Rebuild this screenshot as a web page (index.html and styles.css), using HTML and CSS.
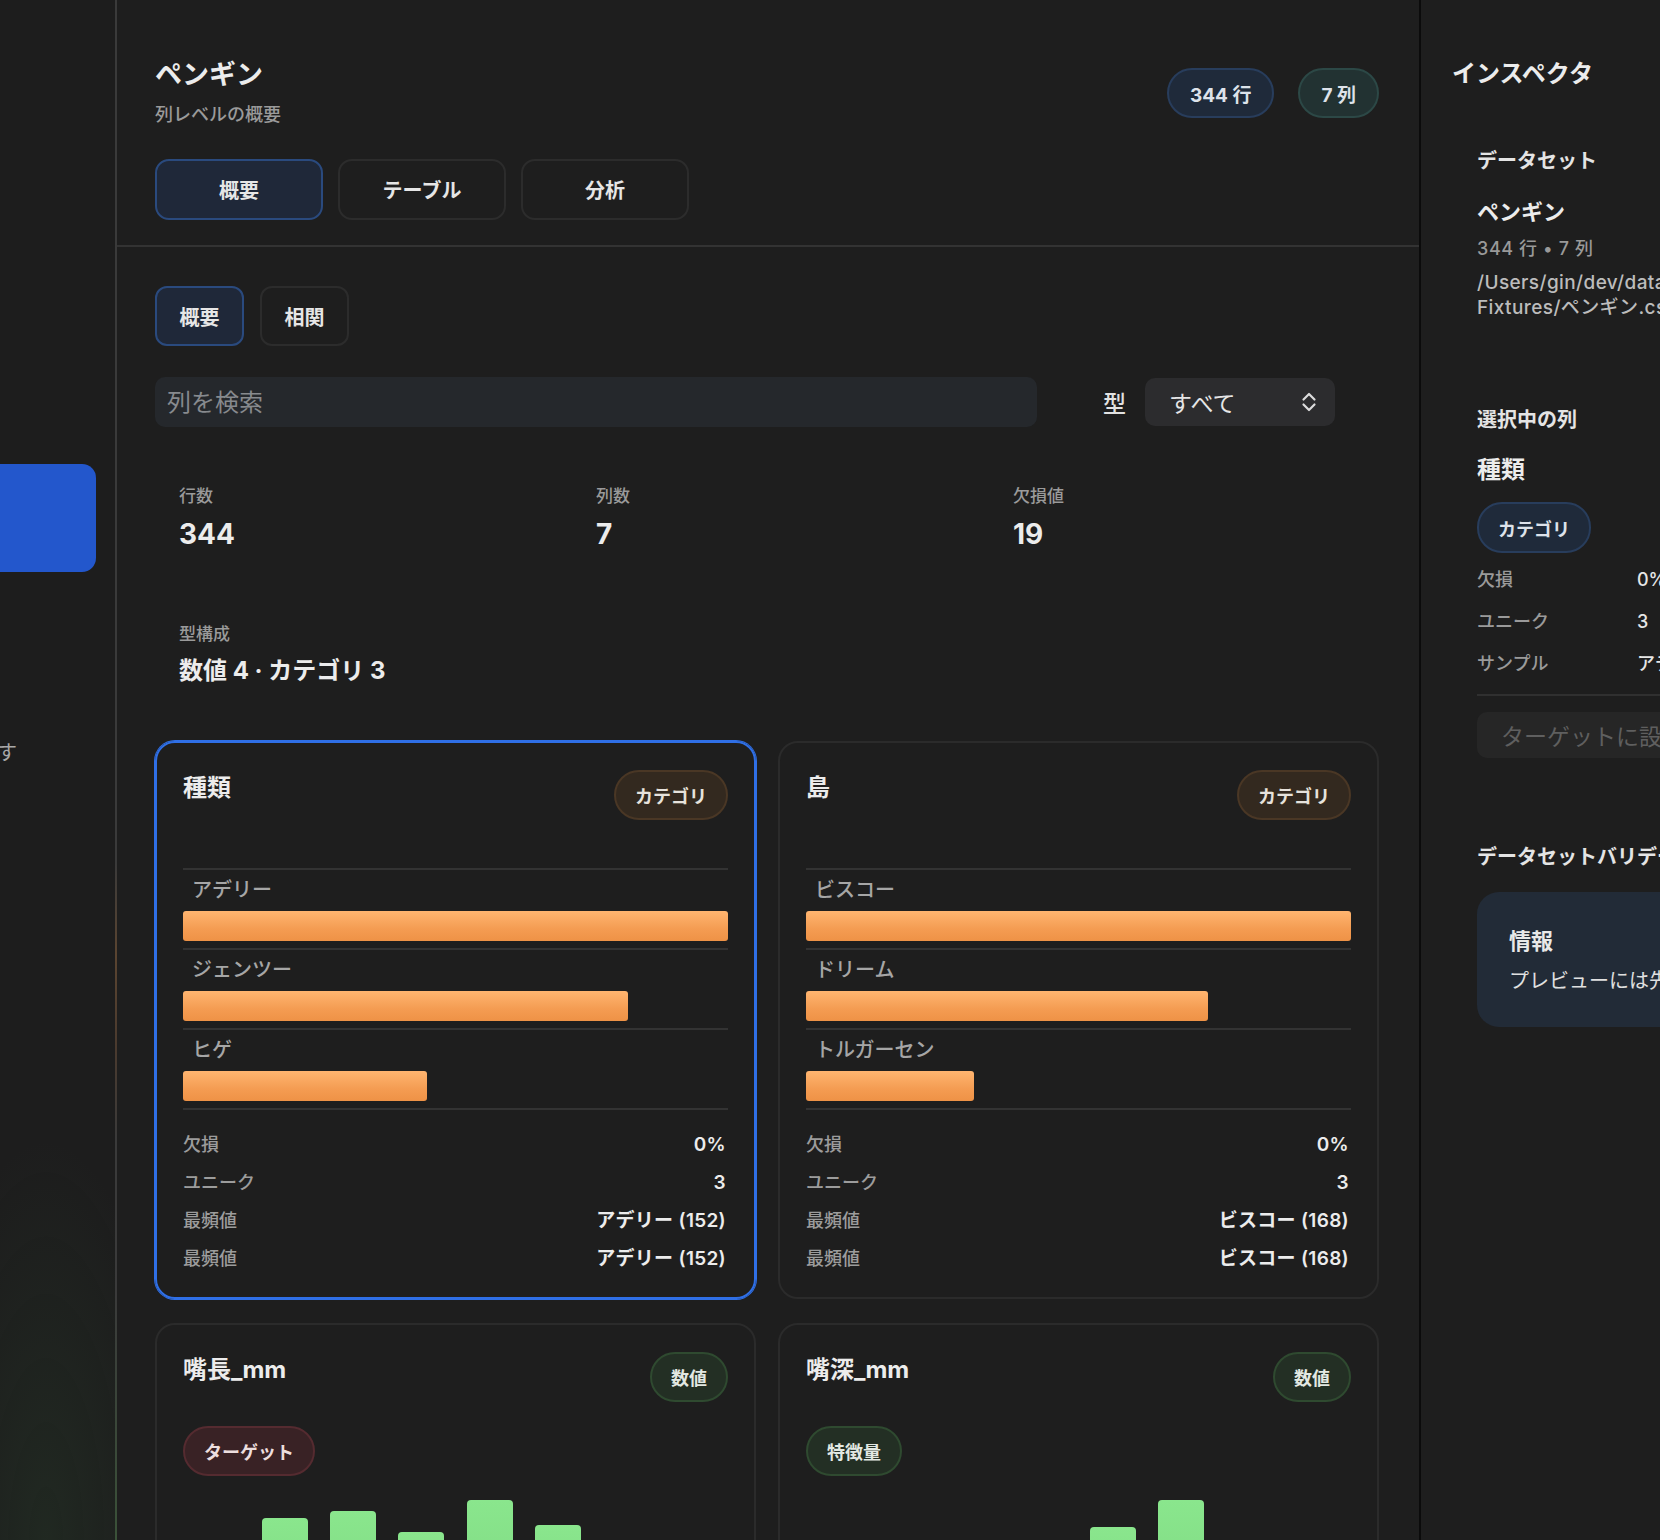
FILE: index.html
```html
<!DOCTYPE html>
<html lang="ja">
<head>
<meta charset="utf-8">
<title>ペンギン</title>
<link rel="stylesheet" href="styles.css">
</head>
<body>
<div class="app">
  <aside class="sidebar">
    <div class="side-active"></div>
    <div class="side-note">データを読み込んでいます</div>
  </aside>

  <main class="main">
    <header class="main-header">
      <div class="head-row">
        <div class="head-text">
          <h1 class="title">ペンギン</h1>
          <p class="subtitle">列レベルの概要</p>
        </div>
        <div class="pills">
          <span class="pill pill-blue">344 行</span>
          <span class="pill pill-teal">7 列</span>
        </div>
      </div>
      <nav class="tabs">
        <button class="tab is-active">概要</button>
        <button class="tab">テーブル</button>
        <button class="tab">分析</button>
      </nav>
    </header>

    <section class="content">
      <div class="subtabs">
        <button class="subtab is-active">概要</button>
        <button class="subtab">相関</button>
      </div>

      <div class="filter-row">
        <input class="search" type="text" placeholder="列を検索">
        <span class="filter-label">型</span>
        <div class="select">
          <span>すべて</span>
          <svg class="chev" width="16" height="22" viewBox="0 0 16 22"><path d="M2.5 8.5 L8 3 L13.5 8.5" fill="none" stroke="#dcdcdc" stroke-width="2.2" stroke-linecap="round" stroke-linejoin="round"/><path d="M2.5 13.5 L8 19 L13.5 13.5" fill="none" stroke="#dcdcdc" stroke-width="2.2" stroke-linecap="round" stroke-linejoin="round"/></svg>
        </div>
      </div>

      <div class="stats">
        <div class="stat"><div class="stat-label">行数</div><div class="stat-value">344</div></div>
        <div class="stat"><div class="stat-label">列数</div><div class="stat-value">7</div></div>
        <div class="stat"><div class="stat-label">欠損値</div><div class="stat-value">19</div></div>
        <div class="stat"><div class="stat-label">型構成</div><div class="stat-value stat-value-sm">数値 4 · カテゴリ 3</div></div>
      </div>

      <div class="cards">
        <article class="card is-selected">
          <div class="card-head">
            <h2 class="card-title">種類</h2>
            <span class="badge badge-cat">カテゴリ</span>
          </div>
          <div class="card-tags"></div>
          <div class="cat-list">
            <div class="cat-row"><div class="cat-label">アデリー</div><div class="cat-bar" style="width:100%"></div></div>
            <div class="cat-row"><div class="cat-label">ジェンツー</div><div class="cat-bar" style="width:81.6%"></div></div>
            <div class="cat-row"><div class="cat-label">ヒゲ</div><div class="cat-bar" style="width:44.7%"></div></div>
          </div>
          <div class="kv">
            <div class="kv-row"><span class="kv-k">欠損</span><span class="kv-v">0%</span></div>
            <div class="kv-row"><span class="kv-k">ユニーク</span><span class="kv-v">3</span></div>
            <div class="kv-row"><span class="kv-k">最頻値</span><span class="kv-v">アデリー (152)</span></div>
            <div class="kv-row"><span class="kv-k">最頻値</span><span class="kv-v">アデリー (152)</span></div>
          </div>
        </article>

        <article class="card">
          <div class="card-head">
            <h2 class="card-title">島</h2>
            <span class="badge badge-cat">カテゴリ</span>
          </div>
          <div class="card-tags"></div>
          <div class="cat-list">
            <div class="cat-row"><div class="cat-label">ビスコー</div><div class="cat-bar" style="width:100%"></div></div>
            <div class="cat-row"><div class="cat-label">ドリーム</div><div class="cat-bar" style="width:73.8%"></div></div>
            <div class="cat-row"><div class="cat-label">トルガーセン</div><div class="cat-bar" style="width:30.9%"></div></div>
          </div>
          <div class="kv">
            <div class="kv-row"><span class="kv-k">欠損</span><span class="kv-v">0%</span></div>
            <div class="kv-row"><span class="kv-k">ユニーク</span><span class="kv-v">3</span></div>
            <div class="kv-row"><span class="kv-k">最頻値</span><span class="kv-v">ビスコー (168)</span></div>
            <div class="kv-row"><span class="kv-k">最頻値</span><span class="kv-v">ビスコー (168)</span></div>
          </div>
        </article>

        <article class="card">
          <div class="card-head">
            <h2 class="card-title">嘴長_mm</h2>
            <span class="badge badge-num">数値</span>
          </div>
          <div class="card-tags"><span class="badge badge-target">ターゲット</span></div>
          <div class="hist">
            <div class="hist-slot"><div class="hist-bar" style="height:30px"></div></div>
            <div class="hist-slot"><div class="hist-bar" style="height:122px"></div></div>
            <div class="hist-slot"><div class="hist-bar" style="height:129px"></div></div>
            <div class="hist-slot"><div class="hist-bar" style="height:108px"></div></div>
            <div class="hist-slot"><div class="hist-bar" style="height:140px"></div></div>
            <div class="hist-slot"><div class="hist-bar" style="height:115px"></div></div>
            <div class="hist-slot"><div class="hist-bar" style="height:60px"></div></div>
            <div class="hist-slot"><div class="hist-bar" style="height:20px"></div></div>
          </div>
        </article>

        <article class="card">
          <div class="card-head">
            <h2 class="card-title">嘴深_mm</h2>
            <span class="badge badge-num">数値</span>
          </div>
          <div class="card-tags"><span class="badge badge-num">特徴量</span></div>
          <div class="hist">
            <div class="hist-slot"><div class="hist-bar" style="height:35px"></div></div>
            <div class="hist-slot"><div class="hist-bar" style="height:60px"></div></div>
            <div class="hist-slot"><div class="hist-bar" style="height:80px"></div></div>
            <div class="hist-slot"><div class="hist-bar" style="height:92px"></div></div>
            <div class="hist-slot"><div class="hist-bar" style="height:113px"></div></div>
            <div class="hist-slot"><div class="hist-bar" style="height:140px"></div></div>
            <div class="hist-slot"><div class="hist-bar" style="height:70px"></div></div>
            <div class="hist-slot"><div class="hist-bar" style="height:30px"></div></div>
          </div>
        </article>
      </div>
    </section>
  </main>

  <aside class="inspector">
    <h2 class="insp-title">インスペクタ</h2>
    <div class="insp-body">
      <h3 class="insp-h insp-h-first">データセット</h3>
      <div class="insp-name">ペンギン</div>
      <div class="insp-meta">344 行 • 7 列</div>
      <div class="insp-path">/Users/gin/dev/datalens/Tests/<br>Fixtures/ペンギン.csv</div>

      <h3 class="insp-h insp-h-sel">選択中の列</h3>
      <div class="insp-col">種類</div>
      <span class="badge badge-blue insp-badge">カテゴリ</span>
      <div class="insp-kv">
        <div class="insp-row"><span class="insp-k">欠損</span><span class="insp-v">0%</span></div>
        <div class="insp-row"><span class="insp-k">ユニーク</span><span class="insp-v">3</span></div>
        <div class="insp-row"><span class="insp-k">サンプル</span><span class="insp-v">アデリー, ジェンツー</span></div>
      </div>
      <button class="insp-btn" disabled>ターゲットに設定</button>

      <h3 class="insp-h insp-h-val">データセットバリデーション</h3>
      <div class="info-box">
        <div class="info-title">情報</div>
        <div class="info-text">プレビューには先頭の行のみが表示されます</div>
      </div>
    </div>
  </aside>
</div>
<div class="ghost">mm||嘴長_mm||体重_g forecastDates=</div>
</body>
</html>
```

FILE: styles.css
```css
* { box-sizing: border-box; }
html, body { margin: 0; padding: 0; }
body {
  width: 1660px;
  height: 1540px;
  overflow: hidden;
  position: relative;
  background: #1e1e1e;
  color: #e8e8e8;
  font-family: "Inter", "Noto Sans CJK JP", sans-serif;
}
h1, h2, h3, p { margin: 0; }
button { font-family: inherit; }

.app {
  display: flex;
  width: 2100px;
  height: 1540px;
}

/* sidebar */
.sidebar {
  width: 117px;
  flex: none;
  border-right: 2px solid #3a3a3a;
  border-image: linear-gradient(to bottom, #3a3a3a 0%, #3a3a3a 56%, #5a4430 62%, #4a3a2e 68%, #3a3a3a 74%, #3a3a3a 84%, #3a5238 100%) 1;
  background:
    radial-gradient(ellipse 160px 500px at 40% 100%, rgba(44, 80, 48, 0.22), transparent 80%),
    #1d1d1d;
  overflow: hidden;
  padding-top: 464px;
}
.side-active {
  width: 96px;
  height: 108px;
  background: #2357cc;
  border-radius: 0 14px 14px 0;
}
.side-note {
  margin-top: 167px;
  margin-left: -222px;
  white-space: nowrap;
  font-size: 20px;
  line-height: 28px;
  color: #a8a8a8;
}

/* main */
.main {
  width: 1302px;
  flex: none;
  overflow: hidden;
}
.main-header {
  padding: 58px 40px 25px 38px;
  border-bottom: 2px solid #333333;
}
.head-row {
  display: flex;
  justify-content: space-between;
  align-items: center;
}
.title {
  font-size: 27px;
  line-height: 34px;
  font-weight: 700;
  color: #ececec;
}
.subtitle {
  margin-top: 10px;
  font-size: 18px;
  line-height: 26px;
  font-weight: 500;
  color: #9a9a9a;
}
.pills { display: flex; gap: 24px; }
.pill {
  display: inline-flex;
  align-items: center;
  height: 50px;
  padding: 0 21px;
  border-radius: 25px;
  border: 2px solid;
  font-size: 19px;
  font-weight: 700;
  color: #dde2ea;
}
.pill-blue { background: #1f2a3a; border-color: #283d5c; }
.pill-teal { background: #223232; border-color: #2c4846; }

.tabs {
  display: flex;
  gap: 15px;
  margin-top: 31px;
}
.tab {
  width: 168px;
  height: 61px;
  border-radius: 14px;
  border: 2px solid #2c2c2c;
  background: transparent;
  color: #e6e6e6;
  font-size: 20px;
  font-weight: 700;
}
.tab.is-active { background: #1f2839; border-color: #2a4a7e; }

.content { padding: 39px 40px 0 38px; }
.subtabs { display: flex; gap: 16px; }
.subtab {
  width: 89px;
  height: 60px;
  border-radius: 12px;
  border: 2px solid #2c2c2c;
  background: transparent;
  color: #e6e6e6;
  font-size: 20px;
  font-weight: 700;
}
.subtab.is-active { background: #1f2839; border-color: #2a4a7e; }

.filter-row {
  display: flex;
  align-items: center;
  margin-top: 31px;
  padding-right: 44px;
}
.search {
  flex: 1;
  height: 50px;
  border: none;
  outline: none;
  border-radius: 10px;
  background: #25282c;
  padding: 0 12px;
  font-family: inherit;
  font-size: 24px;
  color: #e8e8e8;
}
.search::placeholder { color: #878a8e; }
.filter-label {
  margin: 0 19px 0 66px;
  font-size: 23px;
  font-weight: 500;
  color: #e2e2e2;
}
.select {
  width: 190px;
  height: 48px;
  border-radius: 10px;
  background: #2c2c2e;
  display: flex;
  align-items: center;
  justify-content: space-between;
  padding: 0 18px 0 24px;
  font-size: 23px;
  color: #e6e6e6;
}
.chev { display: block; }

.stats {
  margin-top: 40px;
  display: grid;
  grid-template-columns: repeat(3, 1fr);
  column-gap: 27px;
  row-gap: 36px;
}
.stat { padding: 18px 23px 18px 24px; }
.stat-label {
  font-size: 17px;
  line-height: 22px;
  font-weight: 500;
  color: #9a9a9a;
}
.stat-value {
  margin-top: 10px;
  font-size: 28px;
  line-height: 34px;
  font-weight: 700;
  color: #ececec;
}
.stat-value-sm { font-size: 24px; line-height: 32px; }

/* cards */
.cards {
  margin-top: 36px;
  display: grid;
  grid-template-columns: 1fr 1fr;
  column-gap: 22px;
  row-gap: 24px;
}
.card {
  border: 2px solid #2b2b2b;
  border-radius: 20px;
  padding: 27px 26px 19px;
  display: flex;
  flex-direction: column;
  gap: 24px;
}
.card.is-selected {
  border-color: #2f6fe6;
  box-shadow: 0 0 0 1px #2f6fe6;
}
.card-head {
  display: flex;
  justify-content: space-between;
  align-items: flex-start;
}
.card-title {
  margin-top: 2px;
  font-size: 24px;
  line-height: 32px;
  font-weight: 700;
  color: #ececec;
}
.card-tags { display: flex; gap: 12px; }
.badge {
  display: inline-flex;
  align-items: center;
  height: 50px;
  padding: 0 19px;
  border-radius: 25px;
  border: 2px solid;
  font-size: 18px;
  font-weight: 700;
  color: #e6e2dc;
  white-space: nowrap;
}
.badge-cat { background: #33291f; border-color: #4a3725; }
.badge-num { background: #232f24; border-color: #2f4a30; color: #e2e8e2; }
.badge-target { background: #392225; border-color: #552b30; color: #ecdede; }
.badge-blue { background: #1f2a3a; border-color: #283d5c; color: #dde2ea; }

.cat-list { border-bottom: 2px solid #333333; }
.cat-row {
  border-top: 2px solid #333333;
  padding: 6px 0 7px;
}
.cat-label {
  padding-left: 9px;
  font-size: 20px;
  line-height: 28px;
  font-weight: 500;
  color: #a6a6a6;
}
.cat-bar {
  margin-top: 7px;
  height: 30px;
  border-radius: 3px;
  background: linear-gradient(to bottom, #ffb570 0%, #f49c52 60%, #ee9246 100%);
}

.kv { margin-top: -8px; }
.kv-row {
  display: flex;
  justify-content: space-between;
  font-size: 18px;
  line-height: 38px;
}
.kv-k { color: #9c9c9c; font-weight: 500; }
.kv-v { color: #ececec; font-weight: 600; font-size: 19px; letter-spacing: 0.3px; padding-right: 2px; }

.hist {
  height: 140px;
  display: flex;
  align-items: flex-end;
}
.hist-slot {
  flex: 1;
  display: flex;
  justify-content: center;
}
.hist-bar {
  width: 46px;
  border-radius: 4px 4px 0 0;
  background: linear-gradient(to bottom, #8ae68d, #7bd57f);
}

/* inspector */
.inspector {
  width: 420px;
  flex: none;
  border-left: 2px solid #0b0b0b;
  padding: 58px 0 0 31px;
}
.insp-title {
  font-size: 24px;
  line-height: 32px;
  font-weight: 700;
  color: #ececec;
}
.insp-body { padding-left: 25px; }
.insp-h {
  font-size: 20px;
  line-height: 28px;
  font-weight: 700;
  color: #e4e4e4;
}
.insp-h-first { margin-top: 57px; }
.insp-name {
  margin-top: 22px;
  font-size: 22px;
  line-height: 30px;
  font-weight: 700;
  color: #ececec;
}
.insp-meta {
  margin-top: 10px;
  font-size: 18px;
  line-height: 24px;
  color: #999999;
  font-weight: 500;
  letter-spacing: 0.6px;
}
.insp-path {
  margin-top: 9px;
  font-size: 19px;
  line-height: 25px;
  color: #bcbcbc;
  font-weight: 500;
  letter-spacing: 0.4px;
  white-space: nowrap;
}
.insp-h-sel { margin-top: 86px; }
.insp-col {
  margin-top: 20px;
  font-size: 24px;
  line-height: 32px;
  font-weight: 700;
  color: #ececec;
}
.insp-badge { margin-top: 16px; height: 51px; }
.insp-kv {
  margin-top: 6px;
  padding-bottom: 9px;
  border-bottom: 2px solid #303030;
  width: 320px;
}
.insp-row {
  display: grid;
  grid-template-columns: 160px auto;
  font-size: 18px;
  line-height: 42px;
}
.insp-k { color: #9a9a9a; font-weight: 500; }
.insp-v { color: #e6e6e6; font-weight: 500; white-space: nowrap; }
.insp-btn {
  display: block;
  margin-top: 16px;
  width: 320px;
  height: 46px;
  border: none;
  border-radius: 10px;
  background: #262626;
  color: #5f5f5f;
  font-size: 23px;
  text-align: left;
  padding: 0 24px;
}
.insp-h-val { margin-top: 85px; }
.info-box {
  margin-top: 21px;
  width: 360px;
  border-radius: 22px;
  background: #222b37;
  padding: 34px 32px 32px;
}
.info-title {
  font-size: 22px;
  line-height: 30px;
  font-weight: 700;
  color: #e8e8e8;
}
.info-text {
  margin-top: 11px;
  font-size: 20px;
  line-height: 28px;
  color: #e0e0e0;
  white-space: nowrap;
}

/* faint overlay text */
.ghost {
  position: absolute;
  left: -6px;
  top: 117px;
  font-size: 20px;
  line-height: 26px;
  color: rgba(255, 255, 255, 0.022);
  white-space: nowrap;
  pointer-events: none;
}
```
